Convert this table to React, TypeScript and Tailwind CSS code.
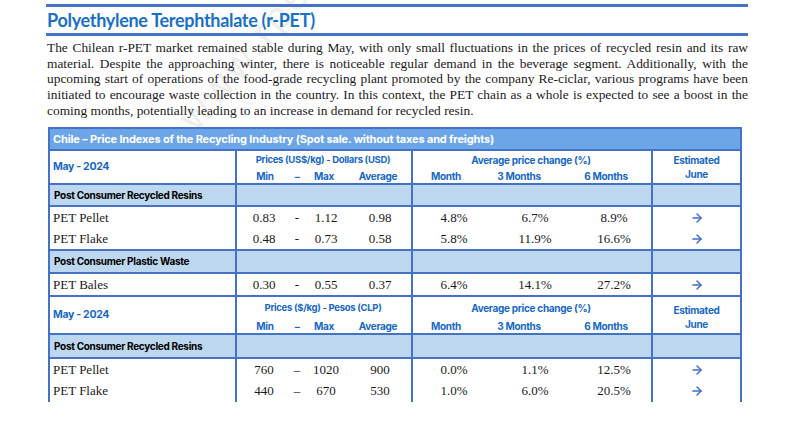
import { ArrowRight } from 'lucide-react';

const blue = 'text-[#1668c8]';

const paragraph = [
  'The Chilean r-PET market remained stable during May, with only small fluctuations in the prices of recycled resin and its raw',
  'material. Despite the approaching winter, there is noticeable regular demand in the beverage segment. Additionally, with the',
  'upcoming start of operations of the food-grade recycling plant promoted by the company Re-ciclar, various programs have been',
  'initiated to encourage waste collection in the country. In this context, the PET chain as a whole is expected to see a boost in the',
];

type Row = { name: string; min: string; max: string; avg: string; m: string; m3: string; m6: string; dash?: string };

// header block of the table (two lines, blue)
function HeaderRow({ prices, tall }: { prices: string; tall?: boolean }) {
  return (
    <div className={`flex border-b-2 border-[#4472c4] ${tall ? 'h-[38px]' : 'h-[34px]'} ${blue} font-bold text-[10px] leading-[14px] tracking-[-0.3px]`}>
      <div className="w-[187px] border-r-2 border-[#4472c4] flex items-center pl-[3px] text-[10.5px]">May - 2024</div>
      <div className={`w-[176px] border-r-2 border-[#4472c4] flex flex-col ${tall ? 'pt-[4px]' : 'pt-[2px]'}`}>
        <div className="text-center text-[9.5px] h-[16px] pr-[2px]">{prices}</div>
        <div className={`grid grid-cols-[56px_8px_46px_62px] text-center ${tall ? 'mt-[2px]' : ''}`}>
          <span>Min</span>
          <span>–</span>
          <span>Max</span>
          <span>Average</span>
        </div>
      </div>
      <div className={`w-[240px] border-r-2 border-[#4472c4] flex flex-col ${tall ? 'pt-[4px]' : 'pt-[2px]'}`}>
        <div className="text-center h-[16px] pr-[2px]">Average price change (%)</div>
        <div className={`grid grid-cols-[66px_80px_94px] text-center ${tall ? 'mt-[2px]' : ''}`}>
          <span>Month</span>
          <span>3 Months</span>
          <span>6 Months</span>
        </div>
      </div>
      <div className={`flex-1 flex flex-col items-center ${tall ? 'pt-[6px]' : 'pt-[2px]'}`}>
        <div>Estimated</div>
        <div>June</div>
      </div>
    </div>
  );
}

function SectionRow({ label, h }: { label: string; h: string }) {
  return (
    <div className={`flex border-b-2 border-[#4472c4] bg-[#bdd7ee] ${h} text-[10px] font-bold text-black tracking-[-0.3px]`}>
      <div className="w-[187px] border-r-2 border-[#4472c4] flex items-center pl-[4px]">{label}</div>
      <div className="w-[176px] border-r-2 border-[#4472c4]" />
      <div className="w-[240px] border-r-2 border-[#4472c4]" />
      <div className="flex-1" />
    </div>
  );
}

function DataRow({ r, last }: { r: Row; last?: boolean }) {
  return (
    <div className={`flex h-[21px] ${last ? 'h-[23px] border-b-2 border-[#4472c4]' : ''} text-[13px] leading-[21px] text-[#1a1a1a] font-['Liberation_Serif',serif]`}>
      <div className="w-[187px] border-r-2 border-[#4472c4] pl-[3px]">{r.name}</div>
      <div className="w-[176px] border-r-2 border-[#4472c4] grid grid-cols-[54px_12px_46px_62px] text-center">
        <span>{r.min}</span>
        <span>{r.dash ?? '-'}</span>
        <span>{r.max}</span>
        <span>{r.avg}</span>
      </div>
      <div className="w-[240px] border-r-2 border-[#4472c4] grid grid-cols-[82px_80px_78px] text-center">
        <span>{r.m}</span>
        <span>{r.m3}</span>
        <span>{r.m6}</span>
      </div>
      <div className="flex-1 flex items-center justify-center">
        <ArrowRight size={14} strokeWidth={2.5} className="text-[#3f6fcb]" />
      </div>
    </div>
  );
}

const usdResins: Row[] = [
  { name: 'PET Pellet', min: '0.83', max: '1.12', avg: '0.98', m: '4.8%', m3: '6.7%', m6: '8.9%' },
  { name: 'PET Flake', min: '0.48', max: '0.73', avg: '0.58', m: '5.8%', m3: '11.9%', m6: '16.6%' },
];
const usdWaste: Row = { name: 'PET Bales', min: '0.30', max: '0.55', avg: '0.37', m: '6.4%', m3: '14.1%', m6: '27.2%' };
const clpResins: Row[] = [
  { name: 'PET Pellet', min: '760', max: '1020', avg: '900', m: '0.0%', m3: '1.1%', m6: '12.5%', dash: '–' },
  { name: 'PET Flake', min: '440', max: '670', avg: '530', m: '1.0%', m3: '6.0%', m6: '20.5%', dash: '–' },
];

export default function App() {
  return (
    <div className="w-[792px] h-[431px] bg-white relative overflow-hidden font-['Inter',sans-serif]">
      {/* faint watermark */}
      <div className="absolute left-[186px] top-[104px] -rotate-[50deg] origin-left text-[40px] leading-[40px] font-['Liberation_Sans',sans-serif] text-[#eeeeee] tracking-[4px] whitespace-nowrap select-none">
        www.rpet.cl
      </div>

      <div className="relative ml-[46px] w-[702px] pt-[4px]">
        <div className="h-[3px] bg-[#4472c4]" />
        <div className="h-[26px] flex items-center pl-[1px] font-['Lato',sans-serif] font-bold text-[18px] tracking-[-0.3px] text-[#1a6fc6]">
          Polyethylene Terephthalate (r-PET)
        </div>
        <div className="h-[3px] bg-[#4472c4]" />

        <div className="mt-[4px] h-[79px] pl-[1px] font-['Liberation_Serif',serif] text-[13.4px] leading-[15.65px] text-[#1a1a1a]">
          {paragraph.map((l) => (
            <div key={l} className="text-justify [text-align-last:justify]">{l}</div>
          ))}
          <div>coming months, potentially leading to an increase in demand for recycled resin.</div>
        </div>

        {/* price table */}
        <div className="mt-[8px] ml-[2px] w-[694px] h-[275px] overflow-hidden bg-white border-x-2 border-t-2 border-[#4472c4]">
          <div className="h-[22px] border-b-2 border-[#4472c4] bg-[#6ca6e8] flex items-center pl-[3px] text-white font-bold text-[11px] tracking-[-0.15px]">
            Chile – Price Indexes of the Recycling Industry (Spot sale. without taxes and freights)
          </div>
          <HeaderRow prices="Prices (US$/kg) - Dollars (USD)" />
          <SectionRow label="Post Consumer Recycled Resins" h="h-[22px]" />
          {usdResins.map((r, i) => (
            <DataRow key={r.name} r={r} last={i === usdResins.length - 1} />
          ))}
          <SectionRow label="Post Consumer Plastic Waste" h="h-[23px]" />
          <DataRow r={usdWaste} last />
          <HeaderRow prices="Prices ($/kg) - Pesos (CLP)" tall />
          <SectionRow label="Post Consumer Recycled Resins" h="h-[24px]" />
          {clpResins.map((r) => (
            <DataRow key={r.name + r.min} r={r} />
          ))}
          <div className="flex h-[21px]">
            <div className="w-[187px] border-r-2 border-[#4472c4]" />
            <div className="w-[176px] border-r-2 border-[#4472c4]" />
            <div className="w-[240px] border-r-2 border-[#4472c4]" />
          </div>
        </div>
      </div>
    </div>
  );
}
